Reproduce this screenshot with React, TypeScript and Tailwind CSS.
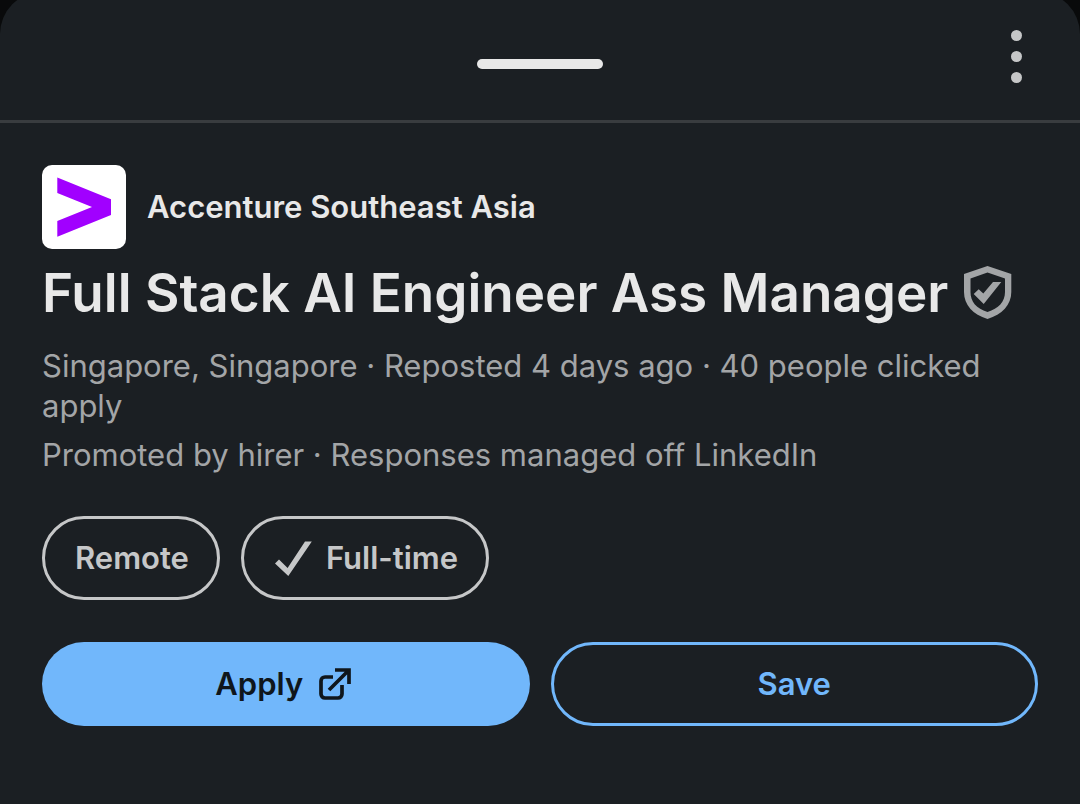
import type { ReactNode } from "react";

function MenuDots() {
    return (
        <svg width="12" height="54" viewBox="0 0 12 54" fill="currentColor" aria-hidden="true">
            <circle cx="5.5" cy="6.5" r="5.5" />
            <circle cx="5.5" cy="27.5" r="5.5" />
            <circle cx="5.5" cy="48.5" r="5.5" />
        </svg>
    );
}

function CompanyLogo() {
    return (
        <div className="size-[84px] shrink-0 rounded-[10px] bg-white">
            <svg viewBox="0 0 84 84" fill="#a100ff" aria-hidden="true">
                <path d="M15.3 12.6 69 34.2V50L15.3 71.8V56L50 42 15.3 28Z" />
            </svg>
        </div>
    );
}

function VerifiedIcon() {
    return (
        <svg width="50" height="54" viewBox="0 0 50 54" fill="#a3a5a7" className="shrink-0" role="img" aria-label="Verified job">
            <path
                fillRule="evenodd"
                d="M25.5 0 49.3 8V26C49.3 39 40 48.5 25.5 53 11 48.5 2 39 2 26V8ZM25.5 6.5 8.5 12.5V26C8.5 36 14.5 42.5 25.5 46 36.5 42.5 43 36 43 26V12.5Z"
            />
            <path d="M39.3 16H31L21.3 27.5 16.7 23.3 11.7 28 21.7 38Z" />
        </svg>
    );
}

function CheckIcon() {
    return (
        <svg width="38" height="36" viewBox="0 0 38 36" fill="currentColor" aria-hidden="true">
            <path d="M37.8 1.5H31L13.6 28 5 19.5 1 23.5 14.3 36Z" />
        </svg>
    );
}

function ExternalIcon() {
    return (
        <svg width="35" height="34" viewBox="0 0 35 34" fill="none" stroke="currentColor" strokeWidth="3.7" aria-hidden="true">
            <path d="M16 10H8A4 4 0 0 0 4 14V27A4 4 0 0 0 8 31H21A4 4 0 0 0 25 27V18" />
            <path d="M18 3H32V17M32 3 12 23" />
        </svg>
    );
}

function Chip({ children }: { children: ReactNode }) {
    return (
        <li className="flex h-[84px] items-center gap-[14px] rounded-full border-3 border-[#c6c7c8] pr-7 pl-[30px] text-[31px] font-semibold text-[#c6c7c8]">
            {children}
        </li>
    );
}

export default function App() {
    return (
        <div className="min-h-screen overflow-hidden bg-[#090a0b] font-['Inter',sans-serif]">
            <div className="-mt-2 min-h-[calc(100vh+8px)] rounded-t-[42px] bg-[#1b1f23]">
                <header className="grid h-[131px] grid-cols-[1fr_auto_1fr] items-start border-b-3 border-[#393c3f]">
                    <div className="col-start-2 mt-[67px] h-[10px] w-[126px] rounded-full bg-[#e8e8e8]" />
                    <button type="button" aria-label="More options" className="mt-[37px] mr-[57px] justify-self-end text-[#c6c7c8]">
                        <MenuDots />
                    </button>
                </header>

                <main className="px-[42px] pt-[42px]">
                    <div className="flex items-center gap-[21px]">
                        <CompanyLogo />
                        <p className="text-[31px] leading-10 font-semibold text-[#e8e8e8]">Accenture Southeast Asia</p>
                    </div>

                    <div className="mt-3 flex items-center gap-[14px]">
                        <h1 className="text-[53px] leading-[64px] font-semibold text-[#e8e8e8]">Full Stack AI Engineer Ass Manager</h1>
                        <VerifiedIcon />
                    </div>

                    <div className="mt-[21px] space-y-[9px] text-[31px] leading-10 text-[#a3a5a7]">
                        <p>Singapore, Singapore · Reposted 4 days ago · 40 people clicked apply</p>
                        <p>Promoted by hirer · Responses managed off LinkedIn</p>
                    </div>

                    <ul className="mt-[41px] flex gap-[21px]">
                        <Chip>Remote</Chip>
                        <Chip>
                            <CheckIcon />
                            Full-time
                        </Chip>
                    </ul>

                    <div className="mt-[42px] grid grid-cols-2 gap-[21px] text-[31px] font-semibold">
                        <button type="button" className="flex h-[84px] items-center justify-center gap-[14px] rounded-full bg-[#71b7fb] pr-1 text-[#0f161c]">
                            Apply
                            <ExternalIcon />
                        </button>
                        <button type="button" className="h-[84px] rounded-full border-3 border-[#71b7fb] text-[#71b7fb]">
                            Save
                        </button>
                    </div>
                </main>
            </div>
        </div>
    );
}
